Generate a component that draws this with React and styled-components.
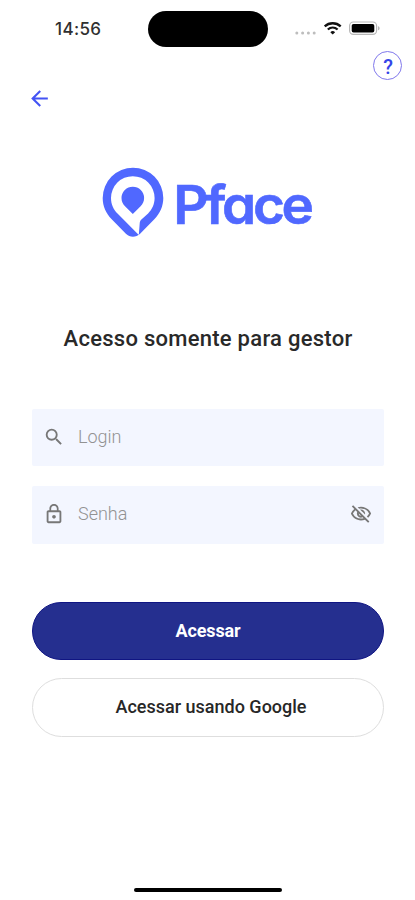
import React from 'react';
import styled, { createGlobalStyle } from 'styled-components';
import { MdSearch, MdLockOutline, MdArrowBack, MdOutlineVisibilityOff } from 'react-icons/md';

const GlobalStyle = createGlobalStyle`
  * { box-sizing: border-box; }
  body { margin: 0; background: #fff; }
  button, input { font: inherit; }
`;

const Screen = styled.main`
  width: 415px;
  height: 900px;
  display: flex;
  flex-direction: column;
  background: #fff;
  font-family: Roboto, sans-serif;
  overflow: hidden;
`;

const StatusBar = styled.div`
  height: 50px;
  display: grid;
  grid-template-columns: 147.5px 120.5px 1fr;
  padding-top: 11px;
`;

const Clock = styled.time`
  padding-left: 55px;
  font: 500 17px/36px Inter, sans-serif;
  letter-spacing: 0.35px;
  color: #303030;
`;

const Island = styled.div`
  height: 35.5px;
  border-radius: 18px;
  background: #000;
`;

const StatusIcons = styled.svg`
  width: 90px;
  height: 20px;
  margin: 7px 0 0 24px;
`;

const HelpRow = styled.div`
  height: 32px;
  display: flex;
  justify-content: flex-end;
  padding: 1px 13px 0 0;
`;

const HelpButton = styled.button`
  width: 29px;
  height: 29px;
  display: grid;
  place-items: center;
  padding: 2px 0 0 1px;
  border: 1px solid #8078ec;
  border-radius: 50%;
  background: #fff;
  color: #3546e8;
  font-size: 20px;
  font-weight: 500;
  line-height: 26px;
`;

const BackButton = styled.button`
  width: 26px;
  height: 26px;
  margin: 3px 0 0 26.5px;
  padding: 0;
  border: 0;
  background: none;
  color: #4353f4;
  display: grid;
  place-items: center;
`;

const Logo = styled.svg`
  width: 216px;
  height: 76px;
  margin: 53px 0 0 100px;
  overflow: visible;
`;

const Wordmark = styled.text`
  font-family: Inter, sans-serif;
  font-weight: 600;
  font-size: 53px;
  letter-spacing: -3.2px;
  font-feature-settings: 'cv11' 1;
  fill: #5068ff;
  stroke: #5068ff;
  stroke-width: 0.6px;
`;

const Title = styled.h1`
  margin: 85px 0 0;
  padding-left: 1px;
  height: 28px;
  font-size: 22px;
  line-height: 28px;
  font-weight: 500;
  text-align: center;
  color: #292929;
  letter-spacing: 0.27px;
`;

const Form = styled.form`
  display: flex;
  flex-direction: column;
  margin: 56px 31px 0 32px;
`;

const Field = styled.label`
  height: ${(p) => p.$height}px;
  margin-bottom: ${(p) => p.$gap}px;
  display: flex;
  align-items: center;
  padding: 0 12px ${(p) => p.$lift}px 11px;
  gap: 13px;
  border-radius: 2px;
  background: #f3f6ff;
  color: #777;
  svg { flex: none; }
`;

const Input = styled.input`
  flex: 1;
  min-width: 0;
  height: 30px;
  padding: 0 0 1px;
  border: 0;
  outline: 0;
  background: transparent;
  font-size: 18px;
  font-weight: 300;
  color: #333;
  &::placeholder { color: #929292; opacity: 1; }
`;

const Action = styled.button`
  height: ${(p) => (p.$primary ? 58 : 59)}px;
  margin-bottom: 18px;
  padding: ${(p) => (p.$primary ? '0 0 2px' : '0 0 2px 6px')};
  border-radius: 30px;
  border: 1px solid ${(p) => (p.$primary ? '#101583' : '#dedede')};
  background: ${(p) => (p.$primary ? '#252f8f' : '#fff')};
  color: ${(p) => (p.$primary ? '#fff' : '#272727')};
  font-size: 18px;
  font-weight: ${(p) => (p.$primary ? 700 : 500)};
  letter-spacing: ${(p) => (p.$primary ? -0.1 : 0)}px;
`;

const HomeIndicator = styled.div`
  width: 148px;
  height: 4px;
  margin: auto 0 8px 134px;
  border-radius: 2px;
  background: #000;
`;

function PfaceLogo() {
  return (
    <Logo viewBox="100 164 216 76" role="img" aria-label="Pface">
      <path
        fill="#5068ff"
        fillRule="evenodd"
        d="M133 167.7a30.3 30.3 0 0 0-30.3 30.3c0 8 3.2 15.5 9 21.200l14.200 14.500c4 4 10 4 14.200 0l14.200-14.500c5.800-5.800 9-13.200 9-21.200A30.300 30.300 0 0 0 133 167.700Z
        M132.800 176.200A21.800 21.800 0 0 0 111 198c0 6 2.400 11.500 6.500 15.500l21.300 21.400.9-11.500c.1-1.500.6-2.700 1.700-3.800l6.700-6.200c4.100-4 6.500-9.400 6.500-15.400A21.800 21.800 0 0 0 132.800 176.200Z
        M132.800 186.700a11.300 11.300 0 0 0-11.300 11.300c0 3.400 1.300 6 3.500 8.200l7.800 7.800 7.800-7.800c2.200-2.200 3.500-4.800 3.500-8.200a11.300 11.300 0 0 0-11.300-11.300Z"
      />
      <Wordmark x="173.200" y="223.700" textLength="137.500" lengthAdjust="spacingAndGlyphs">Pface</Wordmark>
    </Logo>
  );
}

function DeviceStatus() {
  return (
    <StatusIcons viewBox="292 18 90 20" aria-hidden="true">
      <g fill="#bdbdbd">
        <circle cx="296.800" cy="33" r="1.500" />
        <circle cx="302.600" cy="33" r="1.500" />
        <circle cx="308.400" cy="33" r="1.500" />
        <circle cx="314.200" cy="33" r="1.500" />
      </g>
      <g fill="none" stroke="#111" strokeWidth="2.300">
        <path d="M324.700 26.300a12 12 0 0 1 16 0" />
        <path d="M327.800 29.500a7.500 7.500 0 0 1 9.800 0" />
      </g>
      <path fill="#111" d="m332.700 34.600-2.400-2.400a3.500 3.500 0 0 1 4.800 0Z" />
      <rect x="349.600" y="22" width="27" height="12.400" rx="3.800" fill="none" stroke="#b7b7b7" strokeWidth="1.200" />
      <rect x="351.700" y="24" width="22.600" height="8.500" rx="1.800" fill="#000" />
      <path d="M378 26.200c2.200.7 2.200 3.400 0 4.100Z" fill="#b7b7b7" />
    </StatusIcons>
  );
}

export default function App() {
  return (
    <>
      <GlobalStyle />
      <Screen>
        <StatusBar>
          <Clock>14:56</Clock>
          <Island />
          <DeviceStatus />
        </StatusBar>
        <HelpRow>
          <HelpButton>?</HelpButton>
        </HelpRow>
        <BackButton aria-label="Voltar"><MdArrowBack size={25} /></BackButton>
        <PfaceLogo />
        <Title>Acesso somente para gestor</Title>
        <Form onSubmit={(e) => e.preventDefault()}>
          <Field $height={57} $gap={20} $lift={1}>
            <MdSearch size={22} />
            <Input placeholder="Login" />
          </Field>
          <Field $height={58} $gap={58} $lift={2}>
            <MdLockOutline size={22} />
            <Input type="password" placeholder="Senha" />
            <MdOutlineVisibilityOff size={22} />
          </Field>
          <Action $primary>Acessar</Action>
          <Action type="button">Acessar usando Google</Action>
        </Form>
        <HomeIndicator />
      </Screen>
    </>
  );
}
